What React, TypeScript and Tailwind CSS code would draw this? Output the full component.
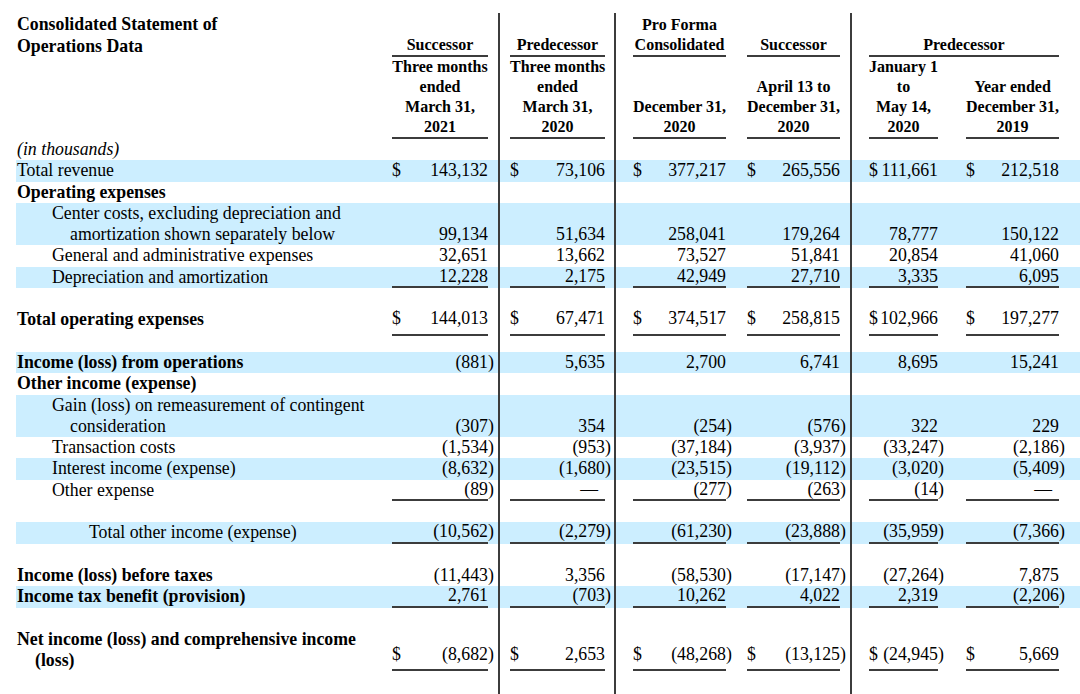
import React from 'react';

// statement table: label column + six value blocks
const GRID = 'grid grid-cols-[376px_108px_116px_124px_112px_103px_115px]';
const BAND = 'bg-[#cceeff]';
const RULE = 'border-r-2 border-[#3c3c3c]';
const LINE = 'border-b-2 border-[#3c3c3c]';

const COLS = [
  { pad: 'pl-0', w: 'w-[96px]', rule: true },
  { pad: 'pl-[10px]', w: 'w-[95px]', rule: true },
  { pad: 'pl-[17px]', w: 'w-[93px]', rule: false },
  { pad: 'pl-[7px]', w: 'w-[93px]', rule: true },
  { pad: 'pl-[17px]', w: 'w-[69px]', rule: false },
  { pad: 'pl-[11px]', w: 'w-[93px]', rule: false },
];

type Under = 'none' | 'line' | 'total';

type Label = { text: string; pad: string };

type Row =
  | { kind: 'spacer'; h: string }
  | {
      kind: 'data';
      label: Label[];
      vals?: string[];
      band?: boolean;
      bold?: boolean;
      italic?: boolean;
      dollar?: boolean;
      ul?: Under;
    };

const L0 = 'pl-px';
const L1 = 'pl-[36px]';
const L1b = 'pl-[54px]';

const rows: Row[] = [
  { kind: 'data', label: [{ text: '(in thousands)', pad: L0 }], italic: true },
  {
    kind: 'data',
    label: [{ text: 'Total revenue', pad: L0 }],
    band: true,
    dollar: true,
    vals: ['143,132', '73,106', '377,217', '265,556', '111,661', '212,518'],
  },
  { kind: 'data', label: [{ text: 'Operating expenses', pad: L0 }], bold: true },
  {
    kind: 'data',
    label: [
      { text: 'Center costs, excluding depreciation and', pad: L1 },
      { text: 'amortization shown separately below', pad: L1b },
    ],
    band: true,
    vals: ['99,134', '51,634', '258,041', '179,264', '78,777', '150,122'],
  },
  {
    kind: 'data',
    label: [{ text: 'General and administrative expenses', pad: L1 }],
    vals: ['32,651', '13,662', '73,527', '51,841', '20,854', '41,060'],
  },
  {
    kind: 'data',
    label: [{ text: 'Depreciation and amortization', pad: L1 }],
    band: true,
    ul: 'line',
    vals: ['12,228', '2,175', '42,949', '27,710', '3,335', '6,095'],
  },
  { kind: 'spacer', h: 'h-[21.3px]' },
  {
    kind: 'data',
    label: [{ text: 'Total operating expenses', pad: L0 }],
    bold: true,
    dollar: true,
    ul: 'total',
    vals: ['144,013', '67,471', '374,517', '258,815', '102,966', '197,277'],
  },
  { kind: 'spacer', h: 'h-[16.3px]' },
  {
    kind: 'data',
    label: [{ text: 'Income (loss) from operations', pad: L0 }],
    bold: true,
    band: true,
    vals: ['(881)', '5,635', '2,700', '6,741', '8,695', '15,241'],
  },
  { kind: 'data', label: [{ text: 'Other income (expense)', pad: L0 }], bold: true },
  {
    kind: 'data',
    label: [
      { text: 'Gain (loss) on remeasurement of contingent', pad: L1 },
      { text: 'consideration', pad: L1b },
    ],
    band: true,
    vals: ['(307)', '354', '(254)', '(576)', '322', '229'],
  },
  {
    kind: 'data',
    label: [{ text: 'Transaction costs', pad: L1 }],
    vals: ['(1,534)', '(953)', '(37,184)', '(3,937)', '(33,247)', '(2,186)'],
  },
  {
    kind: 'data',
    label: [{ text: 'Interest income (expense)', pad: L1 }],
    band: true,
    vals: ['(8,632)', '(1,680)', '(23,515)', '(19,112)', '(3,020)', '(5,409)'],
  },
  {
    kind: 'data',
    label: [{ text: 'Other expense', pad: L1 }],
    ul: 'line',
    vals: ['(89)', '—', '(277)', '(263)', '(14)', '—'],
  },
  { kind: 'spacer', h: 'h-[21.3px]' },
  {
    kind: 'data',
    label: [{ text: 'Total other income (expense)', pad: 'pl-[73px]' }],
    band: true,
    ul: 'line',
    vals: ['(10,562)', '(2,279)', '(61,230)', '(23,888)', '(35,959)', '(7,366)'],
  },
  { kind: 'spacer', h: 'h-[21.3px]' },
  {
    kind: 'data',
    label: [{ text: 'Income (loss) before taxes', pad: L0 }],
    bold: true,
    vals: ['(11,443)', '3,356', '(58,530)', '(17,147)', '(27,264)', '7,875'],
  },
  {
    kind: 'data',
    label: [{ text: 'Income tax benefit (provision)', pad: L0 }],
    bold: true,
    band: true,
    ul: 'line',
    vals: ['2,761', '(703)', '10,262', '4,022', '2,319', '(2,206)'],
  },
  { kind: 'spacer', h: 'h-[21.3px]' },
  {
    kind: 'data',
    label: [
      { text: 'Net income (loss) and comprehensive income', pad: L0 },
      { text: '(loss)', pad: 'pl-[19px]' },
    ],
    bold: true,
    dollar: true,
    ul: 'total',
    vals: ['(8,682)', '2,653', '(48,268)', '(13,125)', '(24,945)', '5,669'],
  },
  { kind: 'spacer', h: 'h-[24px]' },
];

const ValueCell: React.FC<{ i: number; value: string; dollar?: boolean; ul: Under }> = ({
  i,
  value,
  dollar,
  ul,
}) => {
  const c = COLS[i];
  const paren = value.endsWith(')');
  const num = paren ? value.slice(0, -1) : value;
  const inner =
    ul === 'line'
      ? `leading-[19.3px] ${LINE}`
      : ul === 'total'
        ? `leading-[19.3px] pb-[5px] ${LINE}`
        : 'leading-[21.3px]';
  const hang =
    ul === 'line' ? 'leading-[19.3px] pb-[2px]' : ul === 'total' ? 'leading-[19.3px] pb-[7px]' : 'leading-[21.3px]';

  return (
    <div className={`flex items-end ${c.pad} ${c.rule ? RULE : ''}`}>
      <div className={`${c.w} flex justify-between whitespace-nowrap ${inner}`}>
        <span>{dollar ? '$' : ''}</span>
        <span className={num === '—' ? 'pr-[7px]' : ''}>{num}</span>
      </div>
      <span className={hang}>{paren ? ')' : ''}</span>
    </div>
  );
};

const HeadCell: React.FC<{ i: number; lines: string[] }> = ({ i, lines }) => {
  const c = COLS[i];
  return (
    <div className={`flex items-end ${c.pad} ${c.rule ? RULE : ''}`}>
      <div className={`${c.w} ${LINE} text-center whitespace-nowrap`}>
        {lines.map((l) => (
          <div key={l}>{l}</div>
        ))}
      </div>
    </div>
  );
};

const Spacer: React.FC<{ h: string }> = ({ h }) => (
  <div className={`${GRID} ${h}`}>
    <div />
    {COLS.map((c, i) => (
      <div key={i} className={c.rule ? RULE : ''} />
    ))}
  </div>
);

export default function App() {
  return (
    <div className="w-[1080px] h-[694px] overflow-hidden bg-white text-black pt-[13px] pl-[16px] [font-family:'Liberation_Serif','Times_New_Roman',serif]">
      {/* column headings */}
      <div className={`${GRID} h-[44px] text-[16px] leading-[20px] font-bold`}>
        <div className="pl-px text-[17.8px] leading-[22px]">
          <div>Consolidated Statement of</div>
          <div>Operations Data</div>
        </div>
        <HeadCell i={0} lines={['Successor']} />
        <HeadCell i={1} lines={['Predecessor']} />
        <HeadCell i={2} lines={['Pro Forma', 'Consolidated']} />
        <HeadCell i={3} lines={['Successor']} />
        <div className="col-span-2 flex items-end pl-[17px]">
          <div className={`w-[190px] ${LINE} text-center`}>Predecessor</div>
        </div>
      </div>
      <div className={`${GRID} text-[16px] leading-[20px] font-bold`}>
        <div />
        <HeadCell i={0} lines={['Three months', 'ended', 'March 31,', '2021']} />
        <HeadCell i={1} lines={['Three months', 'ended', 'March 31,', '2020']} />
        <HeadCell i={2} lines={['December 31,', '2020']} />
        <HeadCell i={3} lines={['April 13 to', 'December 31,', '2020']} />
        <HeadCell i={4} lines={['January 1', 'to', 'May 14,', '2020']} />
        <HeadCell i={5} lines={['Year ended', 'December 31,', '2019']} />
      </div>

      {/* statement rows */}
      <div className="text-[17.8px]">
        {rows.map((r, idx) => {
          if (r.kind === 'spacer') return <Spacer key={idx} h={r.h} />;
          return (
            <div key={idx} className={`${GRID} ${r.band ? BAND : ''}`}>
              <div className={`${r.bold ? 'font-bold' : ''} ${r.italic ? 'italic' : ''} whitespace-nowrap`}>
                {r.label.map((l) => (
                  <div key={l.text} className={`${l.pad} leading-[21.3px]`}>
                    {l.text}
                  </div>
                ))}
              </div>
              {COLS.map((c, i) =>
                r.vals ? (
                  <ValueCell key={i} i={i} value={r.vals[i]} dollar={r.dollar} ul={r.ul ?? 'none'} />
                ) : (
                  <div key={i} className={c.rule ? RULE : ''} />
                ),
              )}
            </div>
          );
        })}
      </div>
    </div>
  );
}
